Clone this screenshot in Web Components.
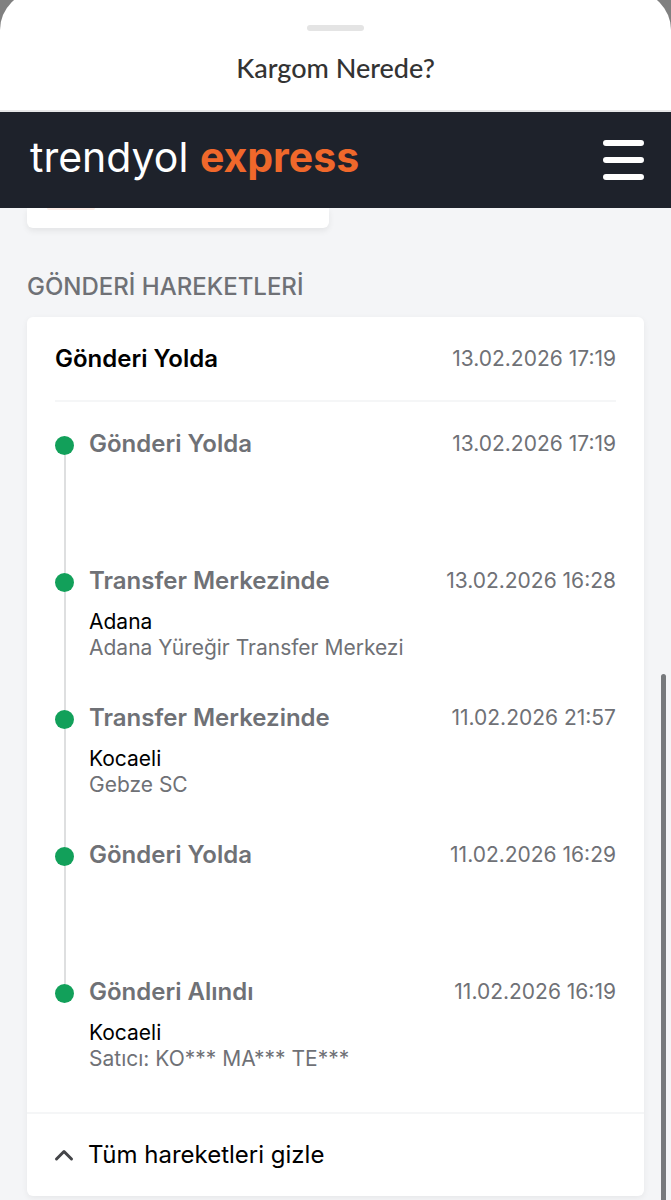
<!DOCTYPE html>
<html lang="tr">
<head>
<meta charset="utf-8">
<meta name="viewport" content="width=device-width,initial-scale=1">
<title>Kargom Nerede?</title>
<style>
:root{--ink:#000;--mut:#6f7176;--line:#f5f6f7;--rail:#dedfe0;--page:#f4f5f7;--card:#fff;--navy:#1e222b;--acc:#f0682b;--ok:#12a05a}
*{box-sizing:border-box}
body{margin:0;background:var(--page);font-family:Inter,"Liberation Sans",sans-serif;color:var(--ink)}
</style>
</head>
<body>
<cargo-sheet>
  <span slot="title">Kargom Nerede?</span>
  <express-header></express-header>
  <cargo-scroll>
    <cargo-peek></cargo-peek>
    <section-title>GÖNDERİ HAREKETLERİ</section-title>
    <movement-card>
      <span slot="status">Gönderi Yolda</span>
      <time slot="when" datetime="2026-02-13T17:19">13.02.2026 17:19</time>
      <movement-item>
        Gönderi Yolda
        <time slot="when" datetime="2026-02-13T17:19">13.02.2026 17:19</time>
      </movement-item>
      <movement-item>
        Transfer Merkezinde
        <time slot="when" datetime="2026-02-13T16:28">13.02.2026 16:28</time>
        <span slot="city">Adana</span>
        <span slot="place">Adana Yüreğir Transfer Merkezi</span>
      </movement-item>
      <movement-item>
        Transfer Merkezinde
        <time slot="when" datetime="2026-02-11T21:57">11.02.2026 21:57</time>
        <span slot="city">Kocaeli</span>
        <span slot="place">Gebze SC</span>
      </movement-item>
      <movement-item>
        Gönderi Yolda
        <time slot="when" datetime="2026-02-11T16:29">11.02.2026 16:29</time>
      </movement-item>
      <movement-item last>
        Gönderi Alındı
        <time slot="when" datetime="2026-02-11T16:19">11.02.2026 16:19</time>
        <span slot="city">Kocaeli</span>
        <span slot="place">Satıcı: KO*** MA*** TE***</span>
      </movement-item>
    </movement-card>
  </cargo-scroll>
</cargo-sheet>

<script>
/* Attach an open shadow root once and fill it with styles + markup. */
function buildShadow(el, style, html) {
  if (el.shadowRoot) return el.shadowRoot;
  const root = el.attachShadow({ mode: 'open' });
  root.innerHTML = '<style>*{box-sizing:border-box}' + style + '</style>' + html;
  return root;
}

/* ===== Bottom sheet: rounded top, grab handle, title ===== */
const SHEET_STYLE = `
:host{display:flex;flex-direction:column;min-height:100vh}
.top{background:#808080;overflow:hidden;border-bottom:2px solid #e6e7e8}
.lip{display:flex;flex-direction:column;align-items:center;margin-top:-9px;padding:34px 20px 24px;background:var(--card);border-radius:39px 39px 0 0}
.grab{width:57px;height:6px;border-radius:3px;background:#e4e4e4}
h1{margin:19px 0 0;font:500 27px/36px Lato,sans-serif;color:#333}`;
class CargoSheet extends HTMLElement {
  connectedCallback() {
    buildShadow(this, SHEET_STYLE,
      '<div class="top"><div class="lip"><div class="grab"></div><h1><slot name="title"></slot></h1></div></div><slot></slot>');
  }
}
customElements.define('cargo-sheet', CargoSheet);

/* ===== Dark brand bar ===== */
const HEADER_STYLE = `
:host{display:flex;align-items:center;justify-content:space-between;height:96px;padding:0 27px 0 30px;background:var(--navy)}
a{padding-bottom:6px;font-weight:400;font-size:41px;line-height:48px;color:#fff;text-decoration:none}
b{font-weight:700;color:var(--acc)}
button{display:flex;padding:0;border:0;background:none;cursor:pointer}
svg{display:block}`;
class ExpressHeader extends HTMLElement {
  connectedCallback() {
    buildShadow(this, HEADER_STYLE,
      '<a href="#">trendyol <b>express</b></a>' +
      '<button type="button" aria-label="Menü"><svg width="41" height="40" viewBox="0 0 41 40" stroke="#fff" stroke-width="6" stroke-linecap="round"><path d="M3 3H38M3 20H38M3 37H38"/></svg></button>');
  }
}
customElements.define('express-header', ExpressHeader);

/* ===== Scrolling content with its overlay scrollbar thumb ===== */
const SCROLL_STYLE = `
:host{display:block;position:relative;flex:1;padding:0 27px 3px}
.thumb{position:absolute;top:47%;right:5px;bottom:0;width:5px;border-radius:3px 3px 0 0;background:#77797c}`;
class CargoScroll extends HTMLElement {
  connectedCallback() {
    buildShadow(this, SCROLL_STYLE, '<slot></slot><div class="thumb"></div>');
  }
}
customElements.define('cargo-scroll', CargoScroll);

/* Bottom edge of the card that has scrolled under the brand bar */
const PEEK_STYLE = `
:host{display:block;width:49%;height:20px;padding-left:20px;background:var(--card);border-radius:0 0 6px 6px;box-shadow:0 3px 6px rgba(0,0,0,.07)}
.pill{width:48px;height:2px;border-radius:0 0 8px 8px;background:#fdeee8}`;
class CargoPeek extends HTMLElement {
  connectedCallback() {
    buildShadow(this, PEEK_STYLE, '<div class="pill"></div>');
  }
}
customElements.define('cargo-peek', CargoPeek);

const TITLE_STYLE = `
:host{display:block}
h2{margin:43px 0 14px;font-weight:500;font-size:24px;line-height:32px;color:var(--mut)}`;
class SectionTitle extends HTMLElement {
  connectedCallback() {
    buildShadow(this, TITLE_STYLE, '<h2><slot></slot></h2>');
  }
}
customElements.define('section-title', SectionTitle);

/* ===== Movement card: current status, history, collapse button ===== */
const CARD_STYLE = `
:host{display:block;background:var(--card);border-radius:6px;box-shadow:0 2px 6px rgba(0,0,0,.06)}
header{display:flex;align-items:center;justify-content:space-between;height:83px;margin:0 28px}
h3{margin:0;font-weight:600;font-size:24px;line-height:32px}
.when{font-size:21px;line-height:32px;color:var(--mut)}
.list{margin:0 28px;padding:26px 0 40px;border-top:2px solid var(--line)}
button{display:flex;align-items:center;gap:14px;width:100%;height:84px;padding:0 27px;border:0;border-top:2px solid var(--line);background:none;font:400 24px/32px Inter,"Liberation Sans",sans-serif;color:var(--ink);cursor:pointer}
[hidden]{display:none}`;
class MovementCard extends HTMLElement {
  connectedCallback() {
    if (this.shadowRoot) return;
    const root = buildShadow(this, CARD_STYLE,
      '<header><h3><slot name="status"></slot></h3><span class="when"><slot name="when"></slot></span></header>' +
      '<div class="list" id="list" role="list"><slot></slot></div>' +
      '<button type="button" id="toggle" aria-expanded="true" aria-controls="list"><svg width="20" height="14" viewBox="0 0 20 14" fill="none" stroke="#444549" stroke-width="3" stroke-linecap="round" stroke-linejoin="round"><path d="M2.5 11L10 3.5L17.5 11"/></svg><span>Tüm hareketleri gizle</span></button>');
    const list = root.getElementById('list');
    const toggle = root.getElementById('toggle');
    toggle.addEventListener('click', function () {
      list.hidden = !list.hidden;
      toggle.setAttribute('aria-expanded', String(!list.hidden));
    });
  }
}
customElements.define('movement-card', MovementCard);

/* One stop of the timeline. The rail line runs on into the next item's dot. */
const ITEM_STYLE = `
:host{display:flex;gap:15px;min-height:137px}
:host([last]){min-height:0}
:host([last]) .line{display:none}
.rail{display:flex;flex-direction:column;align-items:center;width:19px;padding-top:8px}
.dot{width:19px;height:19px;border-radius:50%;background:var(--ok)}
.line{flex:1;width:2px;margin-bottom:-8px;background:var(--rail)}
.body{flex:1}
.row{display:flex;justify-content:space-between;margin-bottom:12px}
h4{margin:0;font-weight:600;font-size:24px;line-height:32px;color:var(--mut)}
.when{font-size:21px;line-height:32px;color:var(--mut)}
.city,.place{font-size:21px;line-height:26px}
.place{color:var(--mut)}`;
class MovementItem extends HTMLElement {
  connectedCallback() {
    this.setAttribute('role', 'listitem');
    buildShadow(this, ITEM_STYLE,
      '<div class="rail"><div class="dot"></div><div class="line"></div></div>' +
      '<div class="body"><div class="row"><h4><slot></slot></h4><span class="when"><slot name="when"></slot></span></div>' +
      '<div class="city"><slot name="city"></slot></div><div class="place"><slot name="place"></slot></div></div>');
  }
}
customElements.define('movement-item', MovementItem);
</script>
</body>
</html>
